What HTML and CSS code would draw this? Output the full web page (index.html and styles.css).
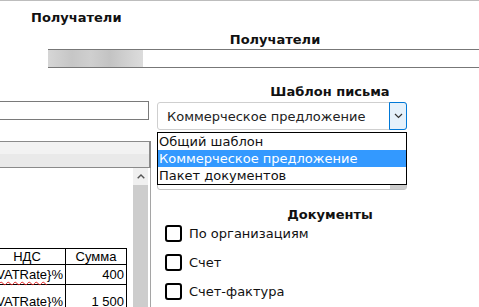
FILE: index.html
```html
<!DOCTYPE html>
<html lang="ru">

<head>
    <meta charset="UTF-8">
    <meta name="viewport" content="width=device-width, initial-scale=1.0">
    <title>Рассылка</title>
    <link rel="stylesheet" href="styles.css">
</head>

<body>
    <div class="page">
        <h2 class="page-title">Получатели</h2>

        <!-- поле получателей -->
        <div class="recipients">
            <div class="section-title">Получатели</div>
            <div class="recipients-field"><span class="blurred"></span></div>
        </div>

        <div class="main">
            <!-- левая колонка: поиск и таблица -->
            <div class="left-col">
                <div class="search-input"></div>
                <div class="grid">
                    <div class="grid-head"></div>
                    <div class="grid-body">
                        <div class="preview">
                            <table class="doc-table">
                                <tr class="row-head">
                                    <td class="col-vat">НДС</td>
                                    <td class="col-sum">Сумма</td>
                                </tr>
                                <tr class="row-one">
                                    <td class="num">{<span class="misspelled">VATRate</span>}%</td>
                                    <td class="num">400</td>
                                </tr>
                                <tr class="row-two">
                                    <td class="num">{<span class="misspelled">VATRate</span>}%</td>
                                    <td class="num">1 500</td>
                                </tr>
                            </table>
                        </div>
                        <div class="scrollbar">
                            <span class="scroll-up">
                                <svg width="8" height="5" viewBox="0 0 8 5"><path d="M0.7 4.3 L4 1 L7.3 4.3" fill="none" stroke="#555" stroke-width="1.4"/></svg>
                            </span>
                            <span class="scroll-thumb"></span>
                        </div>
                    </div>
                </div>
            </div>

            <!-- правая колонка: шаблон и документы -->
            <div class="right-col">
                <div class="section-title">Шаблон письма</div>
                <div class="select-wrap">
                    <div class="select">
                        <span class="select-value">Коммерческое предложение</span>
                        <span class="select-btn">
                            <svg width="9" height="6" viewBox="0 0 9 6"><path d="M1 1 L4.5 4.5 L8 1" fill="none" stroke="#333" stroke-width="1.2"/></svg>
                        </span>
                    </div>
                    <div class="listbox"><span class="listbox-bar"></span></div>
                    <ul class="dropdown">
                        <li>Общий шаблон</li>
                        <li class="active">Коммерческое предложение</li>
                        <li>Пакет документов</li>
                    </ul>
                </div>

                <div class="section-title docs-title">Документы</div>
                <div class="checks">
                    <label class="check"><span class="box"></span>По организациям</label>
                    <label class="check"><span class="box"></span>Счет</label>
                    <label class="check"><span class="box"></span>Счет-фактура</label>
                </div>
            </div>
        </div>
    </div>
</body>

</html>
```

FILE: styles.css
```css
* {
    margin: 0;
    padding: 0;
    box-sizing: border-box;
}

body {
    font-family: "DejaVu Sans", Verdana, sans-serif;
    font-size: 13px;
    color: #111;
    background-color: #fff;
    overflow: hidden;
}

.page {
    border-top: 1px solid #bdbdbd;
    height: 307px;
    overflow: hidden;
}

.page-title {
    font-size: 13px;
    line-height: 16px;
    font-weight: bold;
    padding-left: 31px;
    margin-top: 9px;
}

.section-title {
    font-weight: bold;
    line-height: 16px;
    text-align: center;
}

/* получатели */
.recipients {
    margin-left: 48px;
    width: 454px;
    margin-top: 6px;
}

.recipients-field {
    margin-top: 1px;
    height: 19px;
    border-top: 1px solid #777;
    border-bottom: 1px solid #777;
    display: flex;
}

.blurred {
    width: 95px;
    background: linear-gradient(90deg, #d6d6d6, #c6c6c6 25%, #cfcfcf 45%, #c3c3c3 65%, #d2d2d2 85%, #dcdcdc);
}

.main {
    display: flex;
    gap: 6px;
}

/* левая колонка */
.left-col {
    width: 151px;
    flex-shrink: 0;
}

.search-input {
    margin-top: 33px;
    height: 19px;
    border: 1px solid #7a7a7a;
    border-left: 0;
    width: 149px;
}

.grid {
    margin-top: 21px;
}

.grid-head {
    height: 27px;
    border: 1px solid #8a8a8a;
    border-left: 0;
    border-right-width: 2px;
    background: linear-gradient(#f2f2f2 50%, #e9e9e9 50%);
}

.grid-body {
    display: flex;
    height: 160px;
    border-right: 1px solid #a5a5a5;
    padding-right: 2px;
}

.preview {
    flex: 1;
    display: flex;
    justify-content: flex-end;
    align-items: flex-start;
    overflow: hidden;
    padding-top: 80px;
    padding-right: 6px;
}

.doc-table {
    border-collapse: collapse;
    font-family: "Liberation Sans", Arial, sans-serif;
    font-size: 13px;
    color: #000;
    flex-shrink: 0;
}

.doc-table td {
    border: 1px solid #000;
    padding: 0 2px;
    line-height: 14px;
}

.col-vat {
    width: 77px;
    min-width: 77px;
    text-align: center;
}

.col-sum {
    width: 61px;
    min-width: 61px;
    text-align: center;
}

.row-head td {
    height: 16px;
}

.row-one td {
    height: 20px;
}

.row-two td {
    height: 34px;
}

.num {
    text-align: right;
}

.misspelled {
    text-decoration: underline wavy #e02020;
    text-decoration-thickness: 1px;
    text-underline-offset: 2px;
}

.scrollbar {
    width: 15px;
    display: flex;
    flex-direction: column;
    background-color: #f0f0f0;
}

.scroll-up {
    height: 17px;
    display: flex;
    align-items: center;
    justify-content: center;
}

.scroll-thumb {
    flex: 1;
    background-color: #cdcdcd;
}

/* правая колонка */
.right-col {
    width: 250px;
    flex-shrink: 0;
}

.right-col .section-title {
    width: 346px;
}

.right-col > .section-title:first-child {
    margin-top: 16px;
}

.select-wrap {
    position: relative;
    margin-top: 2px;
}

.select {
    height: 28px;
    border: 1px solid #cfcfcf;
    border-radius: 3px;
    display: flex;
    align-items: center;
    padding-left: 9px;
    color: #222;
}

.select-value {
    flex: 1;
}

.select-btn {
    width: 18px;
    height: 28px;
    margin-right: -1px;
    border: 1px solid #0078d7;
    border-radius: 0 3px 3px 0;
    background-color: #e5f1fb;
    display: flex;
    align-items: center;
    justify-content: center;
}

.listbox {
    margin-top: 2px;
    height: 58px;
    border: 1px solid #c4c4c4;
    border-radius: 3px;
    display: flex;
    justify-content: flex-end;
}

.listbox-bar {
    width: 16px;
    background-color: #cdcdcd;
}

.dropdown {
    position: absolute;
    top: 30px;
    left: 0;
    right: 0;
    list-style: none;
    background-color: #fff;
    border: 1px solid #000;
    padding-left: 1px;
    color: #111;
}

.dropdown li {
    height: 17px;
    line-height: 17px;
    white-space: nowrap;
}

.dropdown li.active {
    background-color: #3399ff;
    color: #fff;
    margin-left: -1px;
    padding-left: 1px;
}

.docs-title {
    margin-top: 17px;
}

.checks {
    margin-top: 2px;
    display: flex;
    flex-direction: column;
    gap: 12px;
}

.check {
    display: flex;
    align-items: center;
    height: 17px;
    padding-left: 8px;
    gap: 7px;
    color: #111;
}

.box {
    width: 17px;
    height: 17px;
    border: 2px solid #000;
    border-radius: 3px;
}
```
